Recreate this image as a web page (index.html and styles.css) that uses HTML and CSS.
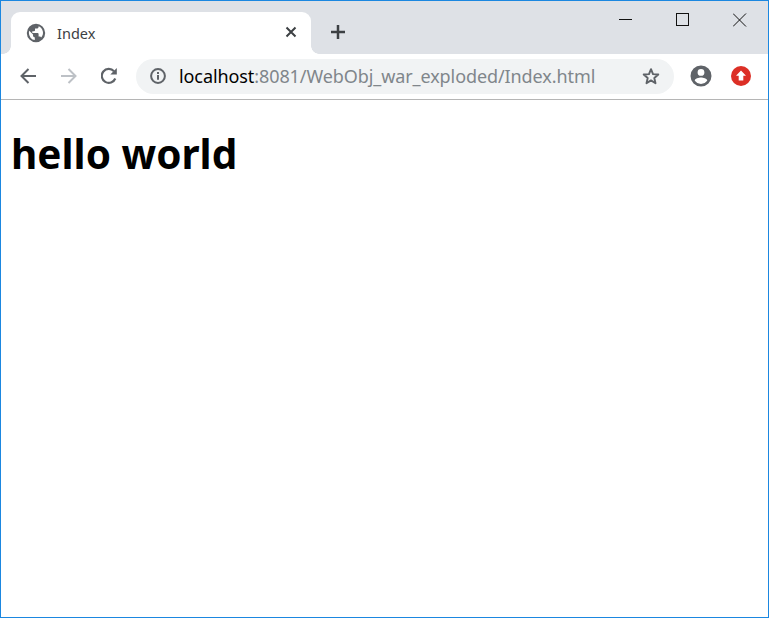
FILE: index.html
```html
<!DOCTYPE html>
<html lang="en">
<head>
<meta charset="utf-8">
<title>Index</title>
<link rel="stylesheet" href="styles.css">
</head>
<body>
<div class="window">
  <header class="tabstrip">
    <div class="tab">
      <svg class="favicon" width="20" height="20" viewBox="0 0 20 20"><path fill="#5f6368" fill-rule="evenodd" d="M10 .8a9.200 9.200 0 1 0 0 18.400A9.200 9.200 0 0 0 10 .8zM2.900 10c0-.8.100-1.500.4-2.200L7 11.500v1c0 1 .8 1.800 1.800 1.800v2.800A7.100 7.100 0 0 1 2.900 10zm12.300 4.800c-.2-.7-.9-1.200-1.700-1.200h-.9v-2.700c0-.5-.4-.9-.9-.9H6.300V8.200h1.800c.5 0 .9-.4.900-.9V5.500h1.800c1 0 1.800-.8 1.800-1.800v-.4a7.100 7.100 0 0 1 2.400 11.500z"/></svg>
      <span class="tab-title">Index</span>
      <svg class="tab-close" width="12" height="12" viewBox="0 0 12 12"><path d="M1.500 1.500l9 9m0-9l-9 9" stroke="#3c4043" stroke-width="2" fill="none"/></svg>
    </div>
    <svg class="new-tab" width="16" height="16" viewBox="0 0 16 16"><path d="M8 1v14M1 8h14" stroke="#3c4043" stroke-width="2.500" fill="none"/></svg>
    <div class="win-controls">
      <svg width="14" height="14" viewBox="0 0 14 14"><path d="M0 6.500h13" stroke="#111" fill="none"/></svg>
      <svg width="14" height="14" viewBox="0 0 14 14"><rect x=".5" y=".5" width="12" height="12" stroke="#111" fill="none"/></svg>
      <svg width="14" height="14" viewBox="0 0 14 14"><path d="M0 .500l13 13m0-13l-13 13" stroke="#111" fill="none"/></svg>
    </div>
  </header>
  <nav class="toolbar">
    <div class="nav-buttons">
      <svg width="18" height="18" viewBox="0 0 18 18"><path d="M17 9H2.500M9.500 2L2.500 9l7 7" stroke="#5f6368" stroke-width="2" fill="none"/></svg>
      <svg width="18" height="18" viewBox="0 0 18 18"><path d="M1 9h14.500M8.500 2l7 7-7 7" stroke="#bdc1c6" stroke-width="2" fill="none"/></svg>
      <svg width="18" height="18" viewBox="1 0 18 18"><path d="M15.300 11.500A7 7 0 1 1 14 4.200" stroke="#5f6368" stroke-width="2.200" fill="none"/><path d="M16.800 1v6.500h-6.500z" fill="#5f6368"/></svg>
    </div>
    <div class="omnibox">
      <svg class="info" width="16" height="16" viewBox="0 0 16 16"><circle cx="8" cy="8" r="6.900" stroke="#5f6368" stroke-width="2" fill="none"/><path d="M7 7h2v4.800H7zM7 4h2v1.900H7z" fill="#5f6368"/></svg>
      <div class="url"><span class="host">localhost</span>:8081/WebObj_war_exploded/Index.html</div>
      <svg class="star" width="18" height="18" viewBox="0 0 18 18"><path d="M9 2.200l2 4.900 5.300.4-4 3.500 1.200 5.200L9 13.400l-4.500 2.800 1.200-5.200-4-3.500 5.300-.4z" stroke="#5f6368" stroke-width="1.900" stroke-linejoin="round" fill="none"/></svg>
    </div>
    <div class="extras">
      <svg width="22" height="22" viewBox="0 0 22 22"><path fill="#5f6368" fill-rule="evenodd" d="M11 .5a10.500 10.500 0 1 0 0 21 10.500 10.500 0 0 0 0-21zM11 4a3.400 3.400 0 1 1 0 6.800A3.400 3.400 0 0 1 11 4zm0 14.900c-2.700 0-5-1.300-6.300-3.300 0-2 4.200-3.200 6.300-3.200s6.300 1.100 6.300 3.200c-1.300 2-3.600 3.300-6.300 3.300z"/></svg>
      <svg width="20" height="20" viewBox="0 0 20 20"><circle cx="10" cy="10" r="10" fill="#dc2f26"/><path d="M10 4.500l5 5.200h-2.700v4.800H7.700V9.700H5z" fill="#fff"/></svg>
    </div>
  </nav>
  <main class="page">
    <h1 class="headline">hello world</h1>
  </main>
</div>
</body>
</html>
```
FILE: styles.css
```css
* { box-sizing: border-box; }
html, body { margin: 0; height: 100%; background: #fff; }
.window {
  width: 769px;
  height: 618px;
  border: 1px solid #1b87e0;
  display: flex;
  flex-direction: column;
  overflow: hidden;
  font-family: "Noto Sans", "Open Sans", sans-serif;
}
.tabstrip {
  height: 53px;
  flex: none;
  background: #dee1e6;
  display: flex;
  align-items: flex-end;
  padding-left: 10px;
}
.tab {
  position: relative;
  width: 300px;
  height: 42px;
  background: #fff;
  border-radius: 9px 9px 0 0;
  display: flex;
  align-items: center;
  padding: 0 14px 0 15px;
}
.tab::before, .tab::after {
  content: "";
  position: absolute;
  bottom: 0;
  width: 8px;
  height: 8px;
  background: radial-gradient(circle at 0 0, #dee1e6 7.500px, #fff 8px);
}
.tab::before { left: -8px; }
.tab::after { right: -8px; background: radial-gradient(circle at 100% 0, #dee1e6 7.500px, #fff 8px); }
.favicon { flex: none; margin-top: -1px; }
.tab-title {
  margin-left: 11px;
  flex: 1;
  font-size: 14.500px;
  color: #3c4043;
}
.tab-close { flex: none; margin-top: -2px; }
.new-tab { flex: none; margin: 0 0 14px 19px; }
.win-controls {
  margin-left: auto;
  align-self: flex-start;
  display: flex;
  gap: 43px;
  padding: 12px 21px 0 0;
}
.toolbar {
  height: 46px;
  flex: none;
  background: #fff;
  border-bottom: 1px solid #b5b5b5;
  display: flex;
  align-items: center;
  padding: 0 18px 1px 18px;
}
.nav-buttons { display: flex; gap: 23px; flex: none; width: 117px; }
.omnibox {
  width: 538px;
  height: 35px;
  flex: none;
  background: #f1f3f4;
  border-radius: 18px;
  display: flex;
  align-items: center;
  padding: 0 14px 0 14px;
}
.info { flex: none; }
.url {
  flex: 1;
  margin-left: 13px;
  font-size: 18px;
  color: #80868b;
  white-space: nowrap;
  letter-spacing: -0.09px;
}
.host { color: #000; }
.star { flex: none; }
.extras {
  display: flex;
  align-items: center;
  gap: 19px;
  margin-left: 16px;
}
.page { flex: 1; background: #fff; padding: 29px 10px 0; }
.headline {
  margin: 0;
  font-size: 40.500px;
  line-height: 50px;
  font-weight: 700;
  color: #000;
}
```
